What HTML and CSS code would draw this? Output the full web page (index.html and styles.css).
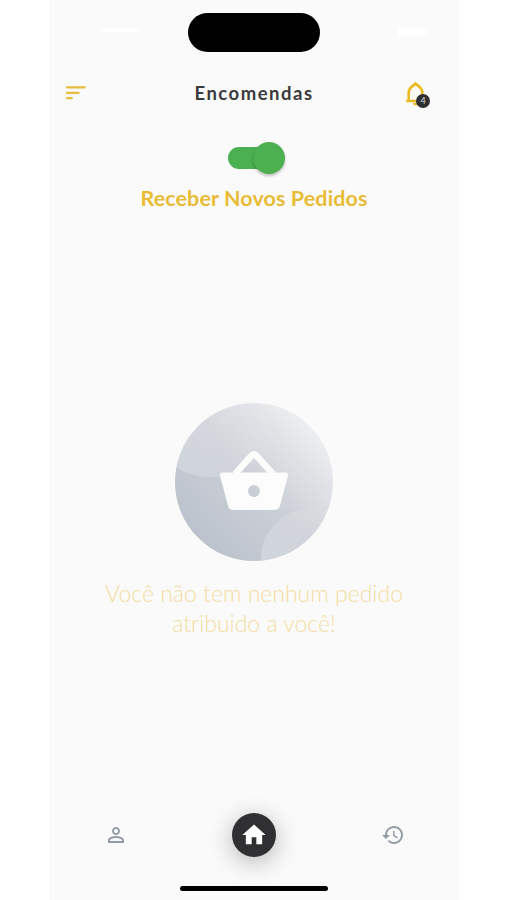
FILE: index.html
```html
<!DOCTYPE html>
<html lang="pt">
<head>
<meta charset="utf-8">
<title>Encomendas</title>
<link rel="stylesheet" href="styles.css">
</head>
<body>
<div class="phone">
  <div class="status">
    <span class="status-mark"></span>
    <span class="island"></span>
    <span class="status-mark status-battery"></span>
  </div>
  <header class="appbar">
    <svg class="menu" viewBox="0 0 20 14"><path d="M1 1.4h17.6M1 6.8h11.5M1 12.1h4.8"/></svg>
    <h1>Encomendas</h1>
    <div class="bell">
      <svg viewBox="0 0 29 29"><path class="bell-line" d="M5.200 22H24.200M7.700 22V13.500C7.700 9.500 10.500 7.200 14.500 5C18.500 7.200 21.300 9.500 21.300 13.500V22"/><path class="bell-fill" d="M14.500 2.600L17.400 6.500H11.600ZM11.800 24H17.200Q16.700 26.600 14.500 26.600T11.800 24Z"/></svg>
      <span class="badge">4</span>
    </div>
  </header>
  <section class="receive">
    <div class="switch"><span class="thumb"></span></div>
    <h2>Receber Novos Pedidos</h2>
  </section>
  <main class="empty">
    <svg class="basket" viewBox="0 0 158 158">
      <defs>
        <linearGradient id="disc" x1="0.1" y1="0.9" x2="0.9" y2="0.12">
          <stop offset="0" stop-color="#bac1cc"/>
          <stop offset="0.5" stop-color="#cbcfd6"/>
          <stop offset="1" stop-color="#f0f1f2"/>
        </linearGradient>
        <linearGradient id="sheen" x1="0" y1="0.8" x2="0.9" y2="0.4">
          <stop offset="0" stop-color="#fff" stop-opacity="0.28"/>
          <stop offset="1" stop-color="#fff" stop-opacity="0"/>
        </linearGradient>
        <clipPath id="round"><circle cx="79" cy="79" r="79"/></clipPath>
      </defs>
      <g clip-path="url(#round)">
        <rect width="158" height="158" fill="url(#disc)"/>
        <circle cx="36" cy="5" r="69" fill="url(#sheen)"/>
        <circle cx="136" cy="156" r="50" fill="url(#sheen)"/>
      </g>
      <path class="handle" d="M60 71L76.4 52.8Q79 49.8 81.6 52.8L98 71"/>
      <path class="body" fill-rule="evenodd" d="M47.500 69.500H110.500Q113.800 69.500 113 72.800L104.900 103Q103.700 107 99.800 107H58.200Q54.300 107 53.100 103L45 72.800Q44.200 69.500 47.500 69.500ZM79 82a6 6 0 1 0 0 12a6 6 0 1 0 0-12Z"/>
    </svg>
    <p>Você não tem nenhum pedido<br>atribuido a você!</p>
  </main>
  <nav class="tabs">
    <svg class="tab" viewBox="0 0 24 24"><path d="M12 5.900c1.160 0 2.100.940 2.100 2.100s-.940 2.100-2.100 2.100S9.900 9.160 9.900 8s.940-2.100 2.100-2.100m0 9c2.970 0 6.100 1.460 6.100 2.100v1.100H5.900V17c0-.640 3.130-2.100 6.100-2.100M12 4C9.790 4 8 5.790 8 8s1.790 4 4 4 4-1.790 4-4-1.790-4-4-4zm0 9c-2.670 0-8 1.340-8 4v3h16v-3c0-2.660-5.330-4-8-4z"/></svg>
    <span class="home"><svg viewBox="0 0 24 24"><path d="M10 20v-6h4v6h5v-8h3L12 3 2 12h3v8z"/></svg></span>
    <svg class="tab" viewBox="0 0 24 24"><path d="M13 3c-4.970 0-9 4.030-9 9H1l3.890 3.890.070.140L9 12H6c0-3.870 3.130-7 7-7s7 3.130 7 7-3.130 7-7 7c-1.930 0-3.680-.790-4.940-2.060l-1.420 1.420C8.270 19.990 10.510 21 13 21c4.970 0 9-4.030 9-9s-4.030-9-9-9zm-1 5v5l4.280 2.540.720-1.210-3.500-2.080V8H12z"/></svg>
  </nav>
  <div class="indicator"></div>
</div>
</body>
</html>
```
FILE: styles.css
```css
* {
  box-sizing: border-box;
}

body {
  margin: 0;
  background: #fff;
  font-family: "Lato", "Liberation Sans", sans-serif;
}

.phone {
  width: 410px;
  height: 900px;
  margin-left: 49px;
  background: #fafafa;
  display: flex;
  flex-direction: column;
  overflow: hidden;
}

.status {
  height: 64px;
  flex: none;
  display: grid;
  grid-template-columns: 139px 132px 139px;
  padding-top: 13px;
}

.island {
  height: 39px;
  border-radius: 20px;
  background: #000;
}

.status-mark {
  width: 38px;
  height: 4px;
  margin: 15px 0 0 52px;
  border-radius: 2px;
  background: #fff;
  filter: blur(1px);
}

.status-battery {
  width: 30px;
  height: 9px;
  margin: 14px 0 0 78px;
}

.appbar {
  height: 58px;
  flex: none;
  display: grid;
  grid-template-columns: 60px 1fr 60px;
  align-items: center;
}

.menu {
  width: 20px;
  height: 14px;
  margin-left: 17px;
  fill: none;
  stroke: #e8bc3c;
  stroke-width: 2.3;
  stroke-linecap: round;
}

.appbar h1 {
  margin: 0;
  text-align: center;
  font-size: 18.5px;
  font-weight: 700;
  letter-spacing: 1.5px;
  color: #3a3a3c;
}

.bell {
  position: relative;
  width: 29px;
  height: 29px;
  margin-left: 2px;
}

.bell svg {
  width: 29px;
  height: 29px;
  display: block;
}

.bell-line {
  fill: none;
  stroke: #ebbb22;
  stroke-width: 2.6;
}

.bell-fill {
  fill: #ebbb22;
}

.badge {
  position: absolute;
  left: 15px;
  top: 15px;
  width: 14px;
  height: 14px;
  border-radius: 50%;
  background: #303032;
  color: #ddd;
  font-size: 9px;
  line-height: 14px;
  text-align: center;
}

.receive {
  height: 98px;
  flex: none;
  padding-top: 20px;
  display: flex;
  flex-direction: column;
  align-items: center;
}

.switch {
  width: 57px;
  height: 32px;
  margin-left: 5px;
  display: flex;
  align-items: center;
  justify-content: flex-end;
}

.switch::before {
  content: "";
  flex: none;
  width: 44px;
  height: 22px;
  margin-right: -19px;
  border-radius: 11px;
  background: #4bb052;
}

.thumb {
  flex: none;
  width: 32px;
  height: 32px;
  border-radius: 50%;
  background: #4caf50;
  box-shadow: 0 2px 3px rgba(0, 0, 0, 0.24);
}

.receive h2 {
  margin: 11px 0 0;
  font-size: 21.5px;
  line-height: 26px;
  font-weight: 700;
  letter-spacing: 0.1px;
  color: #e8bc37;
}

.empty {
  flex: 1;
  padding-top: 183px;
  display: flex;
  flex-direction: column;
  align-items: center;
}

.basket {
  width: 158px;
  height: 158px;
}

.handle {
  fill: none;
  stroke: #fcfcfc;
  stroke-width: 6.5;
}

.body {
  fill: #fcfcfc;
}

.empty p {
  margin: 17px 0 0;
  text-align: center;
  font-weight: 300;
  font-size: 23px;
  line-height: 30px;
  white-space: nowrap;
  color: #f3dda0;
}

.tabs {
  height: 66px;
  flex: none;
  display: grid;
  grid-template-columns: 1fr 144px 1fr;
  align-items: center;
  justify-items: center;
}

.tab {
  width: 24px;
  height: 24px;
  fill: #949ca8;
}

.home {
  width: 44px;
  height: 44px;
  border-radius: 50%;
  background: #303032;
  display: grid;
  place-items: center;
  box-shadow: 0 5px 24px rgba(0, 0, 0, 0.28);
}

.home svg {
  width: 28px;
  height: 28px;
  fill: #fff;
}

.indicator {
  flex: none;
  width: 148px;
  height: 5px;
  margin: 18px auto 9px;
  border-radius: 3px;
  background: #000;
}
```
